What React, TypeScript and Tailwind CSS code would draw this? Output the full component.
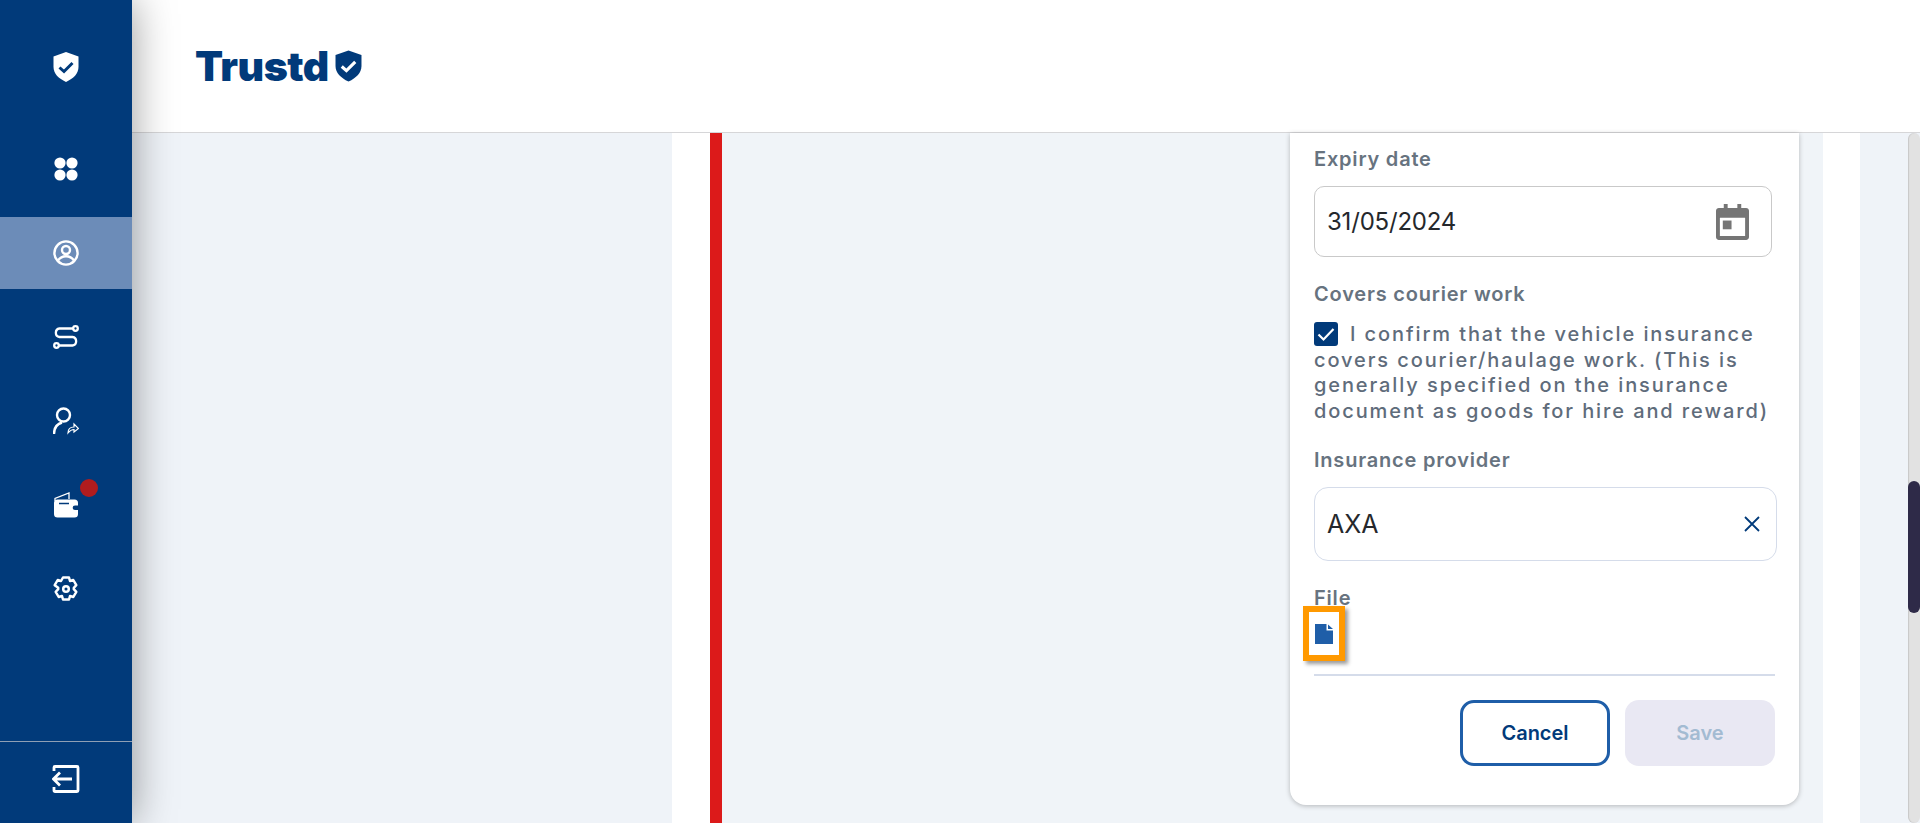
const navIconClass = "w-[26px] h-[30px] text-white";

function ShieldIcon({ className, check }: { className: string; check: string }) {
  return (
    <svg viewBox="0 0 26 30" className={className}>
      <path
        d="M13 0 25.500 4.500V15c0 6.500-5 11.500-12.500 15C5.500 26.500.5 21.500.5 15V4.500Z"
        fill="currentColor"
      />
      <path d="M6.500 15.500l4.500 4 8.500-8.500" fill="none" stroke={check} strokeWidth="3" />
    </svg>
  );
}

function GridIcon() {
  return (
    <svg viewBox="0 0 24 24" className="w-6 h-6 text-white" fill="currentColor">
      <circle cx="6" cy="6" r="5.600" />
      <circle cx="18" cy="6" r="5.600" />
      <circle cx="6" cy="18" r="5.600" />
      <circle cx="18" cy="18" r="5.600" />
    </svg>
  );
}

function ProfileIcon() {
  return (
    <svg viewBox="0 0 26 26" className="w-[26px] h-[26px] text-white" fill="none" stroke="currentColor" strokeWidth="2.400">
      <circle cx="13" cy="13" r="11.600" />
      <circle cx="13" cy="10" r="4" />
      <path d="M5 20.500c2-3 5-4.300 8-4.300s6 1.300 8 4.300" />
    </svg>
  );
}

function RouteIcon() {
  return (
    <svg viewBox="0 0 26 24" className="w-[26px] h-6 text-white" fill="none" stroke="currentColor" strokeWidth="2.300">
      <circle cx="22.500" cy="3.500" r="2.300" />
      <circle cx="3.500" cy="20.500" r="2.300" />
      <path d="M20 3.500H6.500a4.300 4.300 0 0 0 0 8.500h13a4.300 4.300 0 0 1 0 8.500H6" />
    </svg>
  );
}

function UserShareIcon() {
  return (
    <svg viewBox="0 0 26 28" className="w-[26px] h-7 text-white" fill="none" stroke="currentColor">
      <circle cx="10.500" cy="8" r="6.500" strokeWidth="2.400" />
      <path d="M1 27c0-6 3-10 8-11.500" strokeWidth="2.400" />
      <path d="M15 26c0-4 2.500-6 6-6v-3l4.500 4.500-4.500 3.500v-2.500c-2.500 0-4 1-6 3.500Z" strokeWidth="1.200" />
    </svg>
  );
}

function WalletIcon() {
  return (
    <svg viewBox="0 0 24 26" className="w-6 h-[26px] text-white">
      <path d="M1 9V6.500L15 1v6" fill="none" stroke="currentColor" strokeWidth="1.300" />
      <rect x="0" y="7.500" width="24" height="18" rx="3.500" fill="currentColor" />
      <path d="M5 11.500h10" stroke="#013a7a" strokeWidth="1.500" />
      <path d="M24 13.500h-3a2.300 2.300 0 0 0 0 4.600h3" fill="#013a7a" />
    </svg>
  );
}

function GearIcon() {
  return (
    <svg viewBox="0 0 26 26" className="w-[26px] h-[26px] text-white" fill="none" stroke="currentColor" strokeWidth="2.500">
      <path d="M10 1.500h6l1 3.500 3.300-1 3 5.200-2.500 2.600v1.400l2.500 2.600-3 5.200-3.300-1-1 3.500h-6l-1-3.500-3.300 1-3-5.200 2.500-2.600v-1.400L1.700 9.200l3-5.200 3.300 1Z" strokeLinejoin="round" />
      <circle cx="13" cy="13" r="2.800" />
    </svg>
  );
}

function LogoutIcon() {
  return (
    <svg viewBox="0 0 28 28" className="w-7 h-7 text-white" fill="none" stroke="currentColor" strokeWidth="2.800">
      <path d="M2 6V2.500c0-.6.4-1 1-1h22c.6 0 1 .4 1 1v23c0 .6-.4 1-1 1H3c-.6 0-1-.4-1-1V22" />
      <path d="M20 14H2M8 7.500 1.500 14 8 20.500" />
    </svg>
  );
}

function CalendarIcon() {
  return (
    <svg viewBox="0 0 34 37" className="w-[33px] h-9 text-[#757575]" fill="currentColor">
      <path d="M8 0h4v4h10V0h4v4h5c1.700 0 3 1.300 3 3v27c0 1.700-1.300 3-3 3H3c-1.700 0-3-1.300-3-3V7c0-1.700 1.300-3 3-3h5Zm-4 14v19h26V14Z" />
      <rect x="7" y="17" width="9" height="9" />
    </svg>
  );
}

function Label({ children }: { children: string }) {
  return <div className="text-[20px] leading-6 font-semibold text-[#67737f] tracking-[0.8px]">{children}</div>;
}

const navItems = [
  { id: "grid", icon: <GridIcon /> },
  { id: "profile", icon: <ProfileIcon />, active: true },
  { id: "route", icon: <RouteIcon /> },
  { id: "share", icon: <UserShareIcon /> },
  { id: "wallet", icon: <WalletIcon />, badge: true },
  { id: "settings", icon: <GearIcon /> },
];

export default function App() {
  return (
    <div className="flex h-[823px] w-[1920px] overflow-hidden bg-[#eff3f8] font-['Inter',sans-serif]">
      {/* Sidebar */}
      <aside className="relative z-20 flex w-[132px] shrink-0 flex-col bg-[#013a7a] shadow-[0_0_40px_rgba(0,0,0,0.4)]">
        <div className="flex h-[133px] shrink-0 items-center justify-center">
          <ShieldIcon className={navIconClass} check="#013a7a" />
        </div>
        <nav className="flex flex-1 flex-col gap-3">
          {navItems.map((item) => (
            <div
              key={item.id}
              className={`relative flex h-[72px] items-center justify-center ${item.active ? "bg-[#6c8cb8]" : ""}`}
            >
              {item.icon}
              {item.badge && (
                <span className="absolute left-[80px] top-[10px] h-[18px] w-[18px] rounded-full bg-[#b01c1e]" />
              )}
            </div>
          ))}
        </nav>
        <div className="flex h-[82px] shrink-0 items-center justify-center border-t border-[#8f9fb5] pb-2">
          <LogoutIcon />
        </div>
      </aside>

      <div className="flex min-w-0 flex-1 flex-col">
        {/* Header */}
        <header className="flex h-[133px] shrink-0 items-center border-b border-[#d6d6d8] bg-white pl-[63px]">
          <span className="text-[41px] font-black leading-none tracking-[-0.5px] text-[#013a7a]">Trustd</span>
          <ShieldIcon className="ml-[6px] h-[32px] w-[27px] text-[#013a7a]" check="#ffffff" />
        </header>

        {/* Content */}
        <main className="flex min-h-0 flex-1">
          <div className="w-[540px] shrink-0" />
          <div className="flex w-[50px] shrink-0 justify-end bg-white">
            <div className="w-3 bg-[#dc1a1a]" />
          </div>
          <div className="flex flex-1 justify-end bg-[#f0f4f8] pr-[24px]">
            <section className="flex h-[672px] w-[509px] flex-col rounded-b-[16px] bg-white pl-[24px] pr-[22px] shadow-[0_1px_5px_rgba(0,0,0,0.25)]">
              <div className="pt-[14px]">
                <Label>Expiry date</Label>
              </div>
              <div className="mt-[15px] flex h-[71px] w-[458px] items-center justify-between rounded-[10px] border border-[#c9c9c9] pl-3 pr-[22px]">
                <span className="text-[24px] tracking-[-0.2px] text-[#25282c]">31/05/2024</span>
                <CalendarIcon />
              </div>
              <div className="mt-[25px]">
                <Label>Covers courier work</Label>
              </div>
              <div className="mt-[11px] text-[20px] font-medium leading-[25.6px] tracking-[1.9px] text-[#5f6c7b]">
                <span className="mr-3 inline-flex h-6 w-6 translate-y-[5px] items-center justify-center rounded-[3px] bg-[#013a7a] align-baseline">
                  <svg viewBox="0 0 24 24" className="h-6 w-6" fill="none" stroke="#ffffff" strokeWidth="2.200">
                    <path d="M4.500 12.500l5 5L19.500 7" />
                  </svg>
                </span>
                I confirm that the vehicle insurance
                <br />
                covers courier/haulage work. (This is
                <br />
                generally specified on the insurance
                <br />
                document as goods for hire and reward)
              </div>
              <div className="mt-[24px]">
                <Label>Insurance provider</Label>
              </div>
              <div className="mt-[15px] flex h-[74px] w-[463px] items-center justify-between rounded-[14px] border border-[#d5dcea] pl-3 pr-4">
                <span className="text-[25px] text-[#25282c]">AXA</span>
                <svg viewBox="0 0 16 16" className="h-4 w-4" fill="none" stroke="#013a7a" strokeWidth="1.800">
                  <path d="M1 1l14 14M15 1 1 15" />
                </svg>
              </div>
              <div className="mt-[25px]">
                <Label>File</Label>
              </div>
              <div className="-ml-[11px] -mt-[4px] flex h-[55px] w-[42px] items-center justify-center border-[6px] border-[#ff9900] shadow-[3px_3px_4px_rgba(0,0,0,0.4)]">
                <svg viewBox="0 0 18 20" className="h-5 w-[18px]" fill="#1f5ea8">
                  <path d="M0 0h11.500v6.500H18V20H0Z" />
                  <path d="M13 0.500 18 5h-5Z" />
                </svg>
              </div>
              <div className="mt-[13px] h-[2px] w-[461px] bg-[#d5dcea]" />
              <div className="mt-[24px] flex w-[461px] justify-end gap-[15px]">
                <button className="h-[66px] w-[150px] rounded-[14px] border-[3px] border-[#1f5ea8] bg-white text-[20px] font-semibold text-[#013a7a]">
                  Cancel
                </button>
                <button className="h-[66px] w-[150px] rounded-[14px] bg-[#e9e8f3] text-[20px] font-semibold text-[#a3bbd2]">
                  Save
                </button>
              </div>
            </section>
          </div>
          <div className="w-[37px] shrink-0 bg-white" />
          <div className="w-[48px] shrink-0" />
          {/* Scrollbar */}
          <div className="w-3 shrink-0">
            <div className="h-full rounded-full bg-[#e2e2e2] pt-[348px] shadow-[inset_1px_0_1px_rgba(0,0,0,0.12)]">
              <div className="h-[132px] rounded-full bg-[#2e2a48]" />
            </div>
          </div>
        </main>
      </div>
    </div>
  );
}
